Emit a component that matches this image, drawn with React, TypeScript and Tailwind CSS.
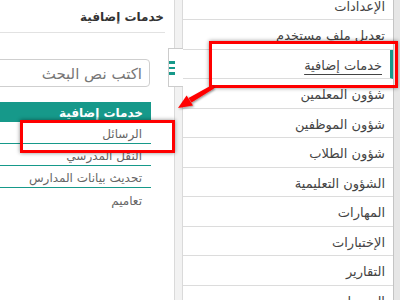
import React from 'react';

const menu = [
  'الإعدادات',
  'تعديل ملف مستخدم',
  'خدمات إضافية',
  'شؤون المعلمين',
  'شؤون الموظفين',
  'شؤون الطلاب',
  'الشؤون التعليمية',
  'المهارات',
  'الإختبارات',
  'التقارير',
  'التسويات',
];

const services = ['الرسائل', 'النقل المدرسي', 'تحديث بيانات المدارس', 'تعاميم'];

export default function App() {
  return (
    <div
      dir="rtl"
      className="relative flex w-[400px] h-[300px] overflow-hidden bg-white font-['DejaVu_Sans',sans-serif]"
    >
      {/* scrollbar */}
      <div className="w-[7px] flex-none bg-[#e6e6e6] border-l border-[#c4c4c4]" />

      {/* side menu */}
      <nav className="w-[210px] flex-none -mt-[9.5px]">
        {menu.map((item) => {
          const active = item === 'خدمات إضافية';
          return (
            <div
              key={item}
              className={`h-[29.5px] flex items-center border-b border-[#dcdcdc] pt-[3px] pr-[8px] text-[13px] text-[#444] ${
                active ? 'border-r-[3px] border-r-[#16998a] pr-[5px]' : ''
              }`}
            >
              <span className={active ? 'underline underline-offset-4' : ''}>{item}</span>
            </div>
          );
        })}
      </nav>

      {/* splitter strip */}
      <div className="w-[9px] flex-none bg-[#f2f2f2] border-x border-[#dadada]" />

      {/* content */}
      <main className="w-[174px] flex-none overflow-hidden">
        <div className="h-[33px] mr-[9px] flex items-center border-b border-[#e2e2e2] pt-[2px] pr-[1px] text-[12px] font-bold text-[#333]">
          خدمات إضافية
        </div>

        <div className="mt-[26px] mr-[24px] w-[190px] h-[28px] rounded-[4px] border border-[#cfcfcf] flex items-center pt-[2px] pr-[7px] text-[15px] text-[#777] whitespace-nowrap">
          اكتب نص البحث
        </div>

        <div className="mt-[15px] mr-[23px] w-[190px]">
          <div className="h-[20px] bg-[#16998a] flex items-center pt-[2px] pr-[8px] text-[12px] font-bold text-white">
            خدمات إضافية
          </div>
          {services.map((s, i) => (
            <div
              key={s}
              className={`h-[22px] flex items-center pt-[3px] pr-[9px] text-[12px] text-[#666] ${
                i < services.length - 1 ? 'border-b border-[#16998a]' : ''
              }`}
            >
              {s}
            </div>
          ))}
        </div>
      </main>

      {/* collapse toggle */}
      <div className="absolute left-[168px] top-[48px] w-[15px] h-[39px] bg-white border border-r-0 border-[#cccccc] flex flex-col items-end pt-[12px] gap-[3px]">
        <span className="block w-[6px] h-[2.5px] bg-[#16998a] mr-[-1px]" />
        <span className="block w-[6px] h-[2.5px] bg-[#16998a] mr-[-1px]" />
        <span className="block w-[6px] h-[2.5px] bg-[#16998a] mr-[-1px]" />
      </div>

      {/* annotations */}
      <div className="absolute left-[209px] top-[41px] w-[189px] h-[47px] border-[3px] border-[#ff0000] shadow-[0_0_4px_rgba(0,0,0,0.45)]" />
      <div className="absolute left-[20px] top-[120px] w-[155px] h-[33px] border-[3px] border-[#ff0000] shadow-[0_0_4px_rgba(0,0,0,0.45)]" />
      <svg className="absolute left-0 top-0" width="400" height="300" viewBox="0 0 400 300">
        <defs>
          <filter id="sh" x="-20%" y="-20%" width="140%" height="140%">
            <feDropShadow dx="1" dy="1" stdDeviation="1.2" floodColor="#000" floodOpacity="0.45" />
          </filter>
        </defs>
        <g filter="url(#sh)" fill="#ff0000" stroke="none">
          <path d="M212 85 L214 88.5 L191.5 102.5 L188.5 98 Z" />
          <path d="M178 108 L186.6 95.4 L193 105.4 Z" />
        </g>
      </svg>
    </div>
  );
}
